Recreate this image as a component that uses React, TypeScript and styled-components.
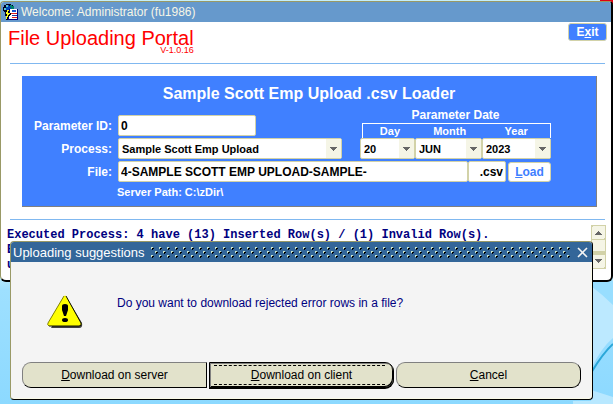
import React from "react";
import styled, { createGlobalStyle, css } from "styled-components";

const GlobalStyle = createGlobalStyle`
  * { box-sizing: border-box; }
  html, body, #root { height: 100%; }
  body {
    margin: 0;
    overflow: hidden;
    font-family: "Liberation Sans", Arial, sans-serif;
    font-size: 12px;
  }
  button, input, select, textarea { font: inherit; margin: 0; }
`;

const edge = "#d2d2a8";
const navy = "#000080";

const Desktop = styled.div`
  position: relative;
  height: 100%;
  padding-top: 1px;
  background: linear-gradient(#c4eefa 0, #c4eefa 270px, #9ee0ff 290px, #8cd9ff 100%);
`;

const Wallpaper = styled.svg`
  position: absolute;
  right: 0;
  bottom: 0;
`;

const RedCorner = styled.svg`
  position: absolute;
  right: 0;
  top: 0;
`;

const AppWindow = styled.main`
  position: relative;
  min-height: 281px;
  background: #fff;
  border: solid #999966;
  border-width: 1px 2px 2px 1px;
  border-right-color: #000;
  border-bottom-color: #000;
  border-radius: 4px 4px 6px 6px;
  overflow: hidden;
`;

const TitleBar = styled.header`
  display: flex;
  align-items: center;
  gap: 2px;
  height: 20px;
  padding-left: 2px;
  background: #6699cc;
  color: #f6f6e6;
`;

const Masthead = styled.div`
  display: flex;
  justify-content: space-between;
  align-items: flex-start;
  height: 41px;
  padding: 1px 4px 0 7px;
`;

const Brand = styled.div`
  display: flex;
  flex-direction: column;
  color: #f00;
`;

const BrandName = styled.h1`
  margin: 5px 0 0;
  font-size: 20px;
  line-height: 20px;
  font-weight: 400;
`;

const Version = styled.span`
  margin-top: -2px;
  font-size: 9px;
  line-height: 9px;
  text-align: right;
`;

const Rule = styled.hr`
  height: 1px;
  margin: 0 6px 0 9px;
  border: 0;
  background: #80b8f0;
`;

const BlueButton = styled.button<{ $light?: boolean }>`
  height: ${(p) => (p.$light ? 20 : 18)}px;
  padding: 0;
  width: ${(p) => (p.$light ? 43 : 39)}px;
  border: 1px solid ${edge};
  border-radius: 3px;
  background: ${(p) => (p.$light ? "#fff" : "#4080ff")};
  color: ${(p) => (p.$light ? "#4080ff" : "#fff")};
  font-weight: 700;
  line-height: 16px;
`;

const Panel = styled.form`
  margin: 12px 14px 12px 21px;
  padding: 8px 45px 6px 0;
  background: #4080ff;
  border: solid #808080;
  border-width: 0 1px 1px 0;
  color: #fff;
  font-weight: 700;
`;

const PanelTitle = styled.h2`
  margin: 0 -45px 0 0;
  font-size: 16px;
  line-height: 20px;
  text-align: center;
`;

const Fields = styled.div`
  display: grid;
  grid-template-columns: 90px 1fr 191px;
  grid-template-rows: 32px 21px 21px 16px;
  row-gap: 2px;
  align-items: end;
`;

const Label = styled.label`
  padding-bottom: 2px;
  text-align: right;
  line-height: 16px;
`;

const boxed = css`
  height: 21px;
  border: 1px solid ${edge};
  border-radius: 2px;
  background: #fff;
  color: #000;
  font-weight: 700;
`;

const TextInput = styled.input<{ $width?: number; $alignRight?: boolean }>`
  ${boxed}
  min-width: 0;
  width: ${(p) => (p.$width ? `${p.$width}px` : "auto")};
  flex: ${(p) => (p.$width ? "none" : "1")};
  padding: 0 2px;
  text-align: ${(p) => (p.$alignRight ? "right" : "left")};
  outline: none;
`;

const Cell = styled.div`
  display: flex;
  margin-left: 6px;
`;

const FileRow = styled(Cell)`
  grid-column: 2 / 4;
  align-items: center;
`;

const LoadSlot = styled.span`
  display: flex;
  margin-left: 2px;
`;

const ServerPath = styled.p`
  grid-column: 2 / 4;
  margin: 0 0 0 5px;
  font-size: 11px;
  line-height: 16px;
`;

const DateBlock = styled.fieldset`
  grid-column: 3;
  grid-row: 1 / 3;
  min-width: 0;
  margin: 0;
  padding: 0;
  border: 0;
`;

const DateTitle = styled.div`
  line-height: 15px;
  text-align: center;
`;

const dateColumns = css`
  display: grid;
  grid-template-columns: 55fr 67fr 69fr;
`;

const DateHeads = styled.div`
  ${dateColumns}
  height: 15px;
  margin-left: 2px;
  border: solid #fff;
  border-width: 1px 1px 0;
  line-height: 15px;
  font-size: 11px;
  text-align: center;
`;

const DateSelects = styled.div`
  ${dateColumns}
`;

const SelectFrame = styled.span`
  position: relative;
  display: flex;
  flex: 1;
  min-width: 0;
`;

const ProcessCell = styled(Cell)`
  margin-right: 18px;
`;

const Select = styled.select`
  ${boxed}
  width: 100%;
  padding: 0 16px 0 3px;
  font-size: 11px;
  appearance: none;
  outline: none;
`;

const SelectArrow = styled.svg`
  position: absolute;
  right: 1px;
  top: 1px;
  pointer-events: none;
`;

const LogArea = styled.div`
  display: flex;
  height: 45px;
  margin: 5px 5px 10px 6px;
`;

const Log = styled.textarea`
  flex: 1;
  padding: 3px 0 0;
  border: 0;
  outline: none;
  resize: none;
  overflow: hidden;
  background: transparent;
  color: ${navy};
  font-family: "Liberation Mono", "Courier New", monospace;
  font-size: 12px;
  line-height: 15px;
  font-weight: 700;
  white-space: pre;
`;

const Dialog = styled.section`
  position: absolute;
  left: 10px;
  right: 20px;
  top: 241px;
  display: flex;
  flex-direction: column;
  background: #f4f4f4;
  border: 1px solid #999966;
  border-right-color: #000;
  border-bottom-color: #000;
  border-radius: 4px;
  box-shadow: inset -1px -1px #fafae8;
  overflow: hidden;
`;

const DialogTitle = styled.header`
  display: flex;
  align-items: center;
  height: 20px;
  padding: 0 4px 0 2px;
  background: #336699;
  color: #fff;
  font-size: 13px;
`;

const Texture = styled.svg`
  flex: 1;
  min-width: 0;
  height: 12px;
  margin: 0 6px;
`;

const CloseButton = styled.button`
  display: flex;
  width: 11px;
  height: 11px;
  padding: 0;
  border: 0;
  background: none;
`;

const DialogBody = styled.div`
  display: flex;
  align-items: flex-start;
  gap: 34px;
  padding: 33px 0 34px 36px;
`;

const Message = styled.p`
  margin: 0;
  line-height: 16px;
  color: ${navy};
`;

const DialogActions = styled.footer`
  display: grid;
  grid-template-columns: repeat(3, 1fr);
  gap: 2px;
  padding: 0 11px 11px;
`;

const ActionButton = styled.button<{ $shape: "left" | "middle" | "both" }>`
  position: relative;
  height: 26px;
  padding: 0;
  color: #000;
  background: #e2e2cb;
  border: 1px solid #808080;
  border-right-color: #000;
  border-bottom-color: #000;
  border-radius: ${(p) =>
    p.$shape === "left" ? "9px 0 0 9px" : p.$shape === "middle" ? "0 9px 9px 0" : "9px"};
  ${(p) =>
    p.$shape === "middle" &&
    css`
      border-color: #000;
      box-shadow: 0 1px #000, inset 1px 1px #808080, inset -1px -1px #000;
      &::after {
        content: "";
        position: absolute;
        inset: 2px 8px 2px 4px;
        border: dashed #000;
        border-width: 1px 0;
      }
    `}
`;

function ArrowDown() {
  return (
    <SelectArrow width="15" height="19" viewBox="0 0 15 19" aria-hidden="true">
      <rect width="15" height="19" fill="#f5f5e6" />
      <path d="M4 8h7v1h-1v1h-1v1h-1v1h-1v-1h-1v-1h-1v-1h-1z" fill="#666" />
    </SelectArrow>
  );
}

function DropDown({ id, value }: { id: string; value: string }) {
  return (
    <SelectFrame>
      <Select id={id} defaultValue={value}>
        <option>{value}</option>
      </Select>
      <ArrowDown />
    </SelectFrame>
  );
}

function AppIcon() {
  return (
    <svg width="16" height="17" viewBox="0 0 16 17" shapeRendering="crispEdges" aria-hidden="true">
      <path d="M3 0h5v1h2v2h1v2h4v11H3v-4H2V8H1V7H0V3h1V1h2z" fill="#000020" />
      <path d="M3 1h3v1h2v4H6v2H3V6H1V4h2z" fill="#0048b8" />
      <path d="M3 1h2v2H3zM1 4h2v2H1z" fill="#58c8d0" />
      <path d="M7 1h2v1h2v3H8V3H7z" fill="#00806a" />
      <path d="M6 5h9v11H5V9h1z" fill="#000080" />
      <path d="M7 5h7v10H6V9h1z" fill="#fff" />
      <path d="M9 6h4v2H9z" fill="#1850d0" />
      <path d="M8 9h6v1H8zM9 13h5v1H9z" fill="#e02020" />
      <path d="M9 11h5v1H9z" fill="#2030a0" />
      <path d="M3 6h3v2H5v1h3v2H7v1H6v1H5v2H3v-3h1v-1H3z" fill="#000" />
      <path d="M4 6h2v1H5v2h2v1H6v1H5v2H4v2H3v-3h1v-2H3V8h1z" fill="#ffff20" />
    </svg>
  );
}

function WarningIcon() {
  return (
    <svg width="36" height="33" viewBox="0 0 36 33" aria-hidden="true">
      <path d="M20 3 L35 28 Q36 33 32 33 H4 Z" fill="#404040" />
      <path d="M17 1 Q18 0 19 1 L34 28 Q35 31 32 31 H3 Q0 31 1 28 Z" fill="#ffff00" />
      <path d="M17 1 L1 28 Q0 30 2 31" fill="none" stroke="#808000" />
      <path d="M19 1 L34 28 Q35 31 32 31 H2" fill="none" stroke="#101000" />
      <path d="M15 11 Q15 9 18 9 Q21 9 21 11 V15 L19 21 H17 L15 15 Z" fill="#000" />
      <ellipse cx="18" cy="25" rx="3" ry="2" fill="#000" />
    </svg>
  );
}

function ScrollTrack() {
  return (
    <svg width="15" height="44" viewBox="0 0 15 44" shapeRendering="crispEdges" aria-hidden="true">
      <rect width="15" height="44" fill="#d2d2a8" />
      <rect x="1" y="1" width="13" height="13" rx="2" fill="#f5f5e6" />
      <rect x="1" y="15" width="13" height="11" fill="#f5f5e6" />
      <rect x="1" y="30" width="13" height="13" rx="2" fill="#f5f5e6" />
      <path d="M7 6h1v1h1v1h1v1h1v1H4V9h1V8h1V7h1z" fill="#666" />
      <path d="M4 34h7v1h-1v1H9v1H8v1H7v-1H6v-1H5v-1H4z" fill="#666" />
    </svg>
  );
}

export default function App() {
  return (
    <>
      <GlobalStyle />
      <Desktop>
        <Wallpaper width="40" height="123" viewBox="0 0 40 123" aria-hidden="true">
          <path d="M0 0H40V57Q28 67 18 88H0z" fill="#bce9ff" />
          <path d="M18 0H40V24Q30 14 18 5z" fill="#98deff" />
          <path d="M40 63Q30 72 18 92" fill="none" stroke="#2ba7d8" strokeWidth="2" />
          <path d="M18 109L40 116V123H0V120H18z" fill="#b8e8ff" />
        </Wallpaper>
        <RedCorner width="13" height="4" viewBox="0 0 13 4" aria-hidden="true">
          <path d="M0 0h13v4H9L7 1H0z" fill="#e00010" />
        </RedCorner>
        <AppWindow>
          <TitleBar>
            <AppIcon />
            <span>Welcome: Administrator (fu1986)</span>
          </TitleBar>
          <Masthead>
            <Brand>
              <BrandName>File Uploading Portal</BrandName>
              <Version>V-1.0.16</Version>
            </Brand>
            <BlueButton type="button">
              E<u>x</u>it
            </BlueButton>
          </Masthead>
          <Rule />
          <Panel onSubmit={(e) => e.preventDefault()}>
            <PanelTitle>Sample Scott Emp Upload .csv Loader</PanelTitle>
            <Fields>
              <Label htmlFor="param">Parameter ID:</Label>
              <Cell>
                <TextInput id="param" $width={138} defaultValue="0" />
              </Cell>
              <DateBlock aria-labelledby="date-title">
                <DateTitle id="date-title">Parameter Date</DateTitle>
                <DateHeads>
                  <label htmlFor="day">Day</label>
                  <label htmlFor="month">Month</label>
                  <label htmlFor="year">Year</label>
                </DateHeads>
                <DateSelects>
                  <DropDown id="day" value="20" />
                  <DropDown id="month" value="JUN" />
                  <DropDown id="year" value="2023" />
                </DateSelects>
              </DateBlock>
              <Label htmlFor="process">Process:</Label>
              <ProcessCell>
                <DropDown id="process" value="Sample Scott Emp Upload" />
              </ProcessCell>
              <Label htmlFor="file">File:</Label>
              <FileRow>
                <TextInput id="file" defaultValue="4-SAMPLE SCOTT EMP UPLOAD-SAMPLE-" />
                <TextInput aria-label="File extension" $width={38} $alignRight defaultValue=".csv" />
                <LoadSlot>
                  <BlueButton type="button" $light>
                    <u>L</u>oad
                  </BlueButton>
                </LoadSlot>
              </FileRow>
              <ServerPath>Server Path: C:\zDir\</ServerPath>
            </Fields>
          </Panel>
          <Rule />
          <LogArea>
            <Log
              aria-label="Process log"
              readOnly
              defaultValue={"Executed Process: 4 have (13) Inserted Row(s) / (1) Invalid Row(s).\nE\nu"}
            />
            <ScrollTrack />
          </LogArea>
        </AppWindow>
        <Dialog role="dialog" aria-labelledby="dialog-title">
          <DialogTitle>
            <span id="dialog-title">Uploading suggestions</span>
            <Texture shapeRendering="crispEdges" aria-hidden="true">
              <defs>
                <pattern id="studs" width="8" height="12" patternUnits="userSpaceOnUse">
                  <path d="M1 2h2v1H2v1H1zM5 6h2v1H6v1H5zM1 10h2v1H2v1H1z" fill="#000" />
                  <path d="M0 1h2v1H1v1H0zM4 5h2v1H5v1H4zM0 9h2v1H1v1H0z" fill="#cce6cc" />
                </pattern>
              </defs>
              <rect width="100%" height="12" fill="url(#studs)" />
            </Texture>
            <CloseButton type="button" aria-label="Close">
              <svg width="11" height="11" viewBox="0 0 11 11" aria-hidden="true">
                <path d="M1 1L10 10M10 1L1 10" stroke="#f4f4f4" strokeWidth="1.6" />
              </svg>
            </CloseButton>
          </DialogTitle>
          <DialogBody>
            <WarningIcon />
            <Message>Do you want to download rejected error rows in a file?</Message>
          </DialogBody>
          <DialogActions>
            <ActionButton type="button" $shape="left">
              <u>D</u>ownload on server
            </ActionButton>
            <ActionButton type="button" $shape="middle">
              <u>D</u>ownload on client
            </ActionButton>
            <ActionButton type="button" $shape="both">
              <u>C</u>ancel
            </ActionButton>
          </DialogActions>
        </Dialog>
      </Desktop>
    </>
  );
}
